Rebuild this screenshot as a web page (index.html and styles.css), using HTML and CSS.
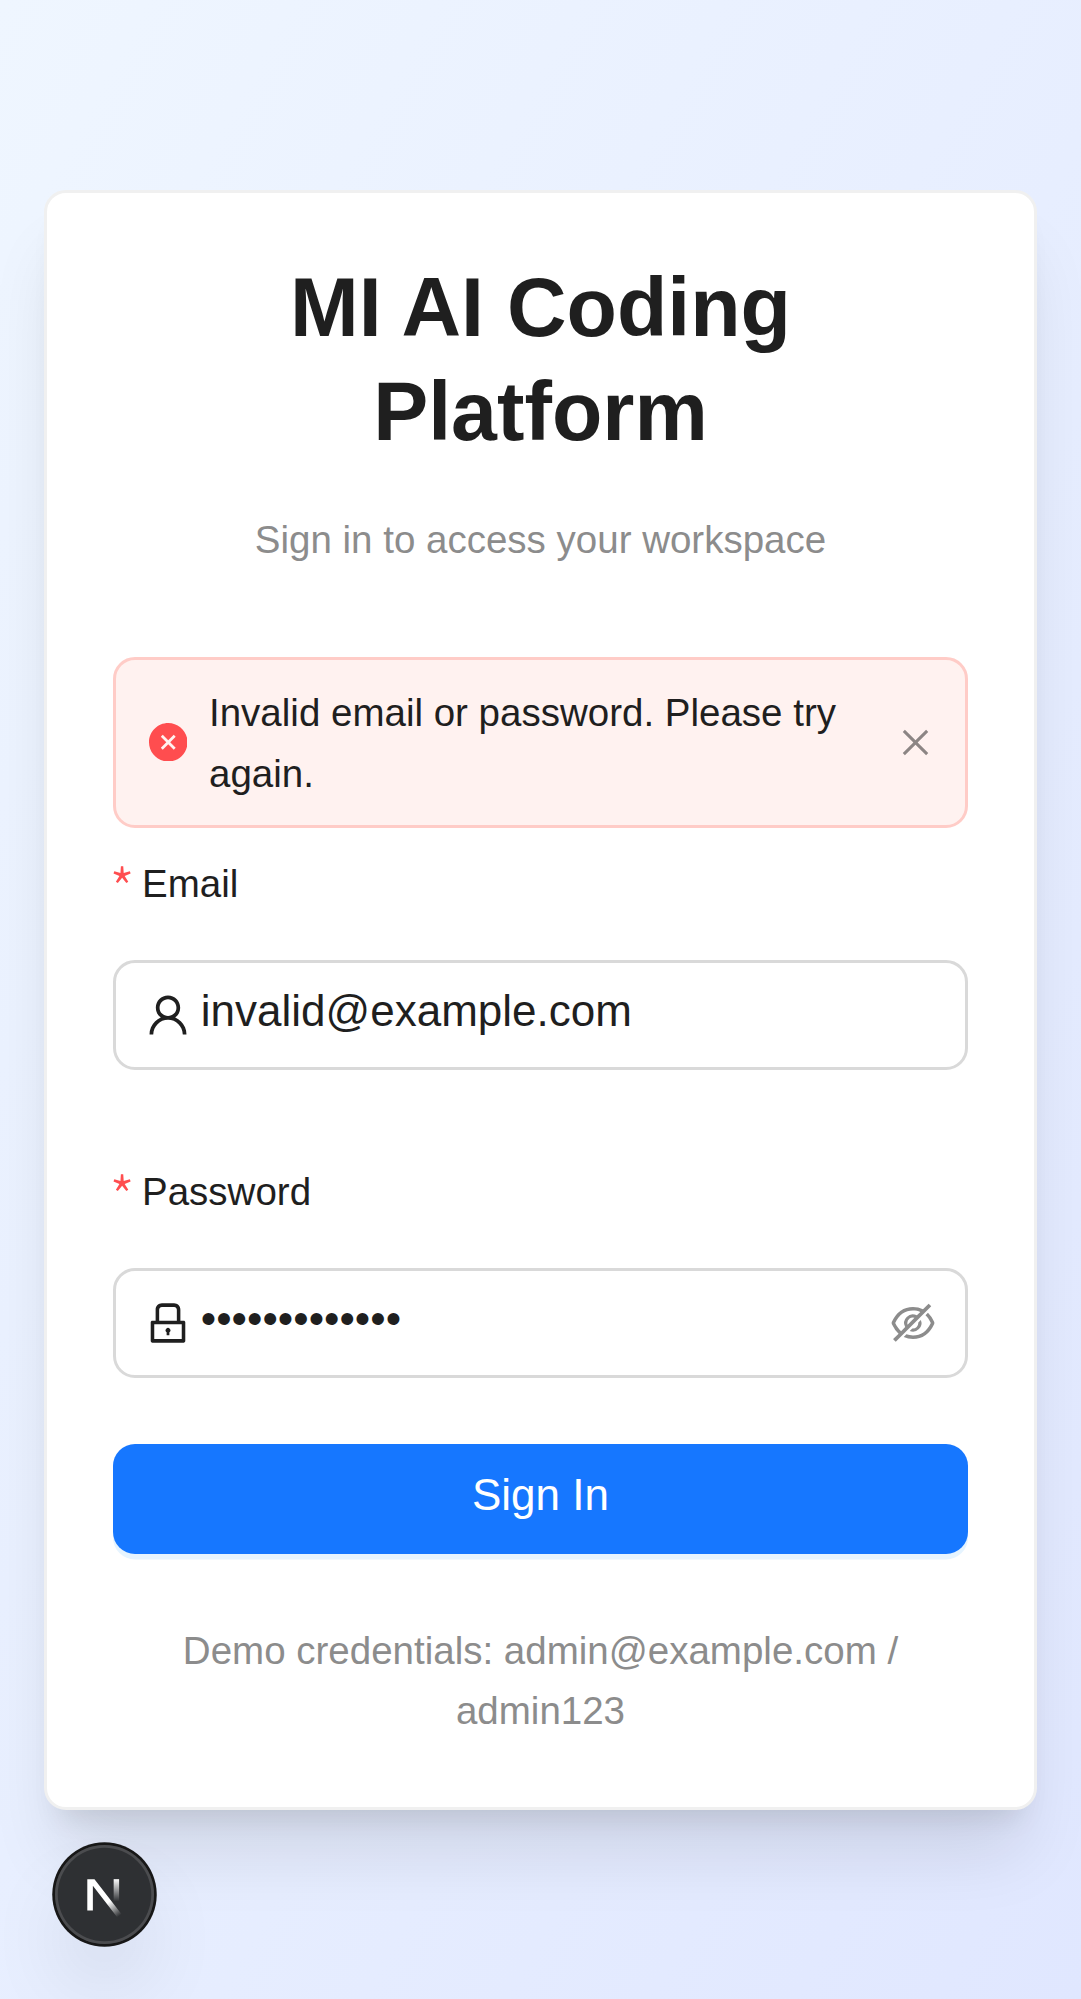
FILE: index.html
```html
<!DOCTYPE html>
<html lang="en">
<head>
<meta charset="utf-8">
<meta name="viewport" content="width=device-width, initial-scale=1">
<title>MI AI Coding Platform</title>
<link rel="stylesheet" href="styles.css">
</head>
<body>
<main class="page">
  <section class="card">
    <header class="intro">
      <h2 class="title">MI AI Coding Platform</h2>
      <p class="subtitle">Sign in to access your workspace</p>
    </header>

    <div class="alert" role="alert">
      <svg class="alert-icon" viewBox="64 64 896 896" aria-hidden="true"><path fill-rule="evenodd" d="M512 64c247.4 0 448 200.6 448 448S759.4 960 512 960 64 759.4 64 512 264.6 64 512 64zm127.98 274.82h-.04l-.08.06L512 466.75 384.14 338.88c-.04-.05-.06-.06-.08-.06a.12.12 0 00-.07 0c-.03 0-.05.01-.09.05l-45.02 45.02a.2.2 0 00-.05.09.12.12 0 000 .07v.02a.27.27 0 00.06.06L466.75 512 338.88 639.86c-.05.04-.06.06-.06.08a.12.12 0 000 .07c0 .03.01.05.05.09l45.02 45.02a.2.2 0 00.09.05.12.12 0 00.07 0c.02 0 .04-.01.08-.05L512 557.25l127.86 127.87c.04.04.06.05.08.05a.12.12 0 00.07 0c.03 0 .05-.01.09-.05l45.02-45.02a.2.2 0 00.05-.09.12.12 0 000-.07v-.02a.27.27 0 00-.05-.06L557.25 512l127.87-127.86c.04-.04.05-.06.05-.08a.12.12 0 000-.07c0-.03-.01-.05-.05-.09l-45.02-45.02a.2.2 0 00-.09-.05.12.12 0 00-.07 0z"/></svg>
      <p class="alert-message">Invalid email or password. Please try again.</p>
      <button class="alert-close" type="button" aria-label="Close">
        <svg viewBox="64 64 896 896" aria-hidden="true"><path fill-rule="evenodd" d="M799.86 166.31c.02 0 .04.02.08.06l57.69 57.7c.04.03.05.05.06.08a.12.12 0 010 .06c0 .03-.02.05-.06.09L569.93 512l287.7 287.7c.04.04.05.06.06.09a.12.12 0 010 .07c0 .02-.02.04-.06.08l-57.7 57.69c-.03.04-.05.05-.07.06a.12.12 0 01-.07 0c-.03 0-.05-.02-.09-.06L512 569.93l-287.7 287.7c-.04.04-.06.05-.09.06a.12.12 0 01-.07 0c-.02 0-.04-.02-.08-.06l-57.69-57.7c-.04-.03-.05-.05-.06-.07a.12.12 0 010-.07c0-.03.02-.05.06-.09L454.07 512l-287.7-287.7c-.04-.04-.05-.06-.06-.09a.12.12 0 010-.07c0-.02.02-.04.06-.08l57.7-57.69c.03-.04.05-.05.07-.06a.12.12 0 01.07 0c.03 0 .05.02.09.06L512 454.07l287.7-287.7c.04-.04.06-.05.09-.06a.12.12 0 01.07 0z"/></svg>
      </button>
    </div>

    <form class="form">
      <div class="field">
        <label class="label" for="email"><span class="required">*</span>Email</label>
        <div class="control">
          <svg class="prefix" viewBox="64 64 896 896" aria-hidden="true"><path d="M858.5 763.6a374 374 0 00-80.6-119.5 375.63 375.63 0 00-119.5-80.6c-.4-.2-.8-.3-1.2-.5C719.5 518 760 444.7 760 362c0-137-111-248-248-248S264 225 264 362c0 82.7 40.5 156 102.8 201.1-.4.2-.8.3-1.2.5-44.8 18.9-85 46-119.5 80.6a375.63 375.63 0 00-80.6 119.5A371.7 371.7 0 00136 901.8a8 8 0 008 8.2h60c4.400 0 7.900-3.500 8-7.800 2-77.200 33-149.500 87.800-204.300 56.700-56.700 132-87.900 212.200-87.900s155.500 31.200 212.200 87.900C779 752.700 810 825 812 902.200c.1 4.400 3.600 7.800 8 7.800h60a8 8 0 008-8.200c-1-47.800-10.900-94.300-29.500-138.200zM512 534c-45.900 0-89.100-17.900-121.600-50.400S340 407.900 340 362c0-45.900 17.900-89.100 50.400-121.600S466.100 190 512 190s89.100 17.900 121.600 50.400S684 316.100 684 362c0 45.900-17.900 89.100-50.400 121.600S557.900 534 512 534z"/></svg>
          <input class="input" id="email" type="text" value="invalid@example.com">
        </div>
      </div>

      <div class="field">
        <label class="label" for="password"><span class="required">*</span>Password</label>
        <div class="control">
          <svg class="prefix" viewBox="64 64 896 896" aria-hidden="true"><path d="M832 464h-68V240c0-70.700-57.300-128-128-128H388c-70.700 0-128 57.300-128 128v224h-68c-17.700 0-32 14.300-32 32v384c0 17.700 14.300 32 32 32h640c17.700 0 32-14.300 32-32V496c0-17.700-14.300-32-32-32zM332 240c0-30.900 25.100-56 56-56h248c30.900 0 56 25.100 56 56v224H332V240zm460 600H232V536h560v304zM484 701v53c0 4.400 3.600 8 8 8h40c4.400 0 8-3.600 8-8v-53a48.010 48.010 0 10-56 0z"/></svg>
          <input class="input" id="password" type="password" value="wrongpassword">
          <svg class="suffix" viewBox="64 64 896 896" aria-hidden="true"><path d="M942.2 486.2Q889.47 375.11 816.7 305l-50.88 50.88C807.31 395.53 843.45 447.4 874.7 512 791.5 684.2 673.4 766 512 766q-72.67 0-133.87-22.38L323 798.75Q408 838 512 838q288.3 0 430.2-300.300a60.290 60.290 0 000-51.500zm-63.570-320.640L836 122.880a8 8 0 00-11.320 0L715.310 232.200Q624.860 186 512 186q-288.300 0-430.200 300.300a60.300 60.300 0 000 51.500q56.690 119.400 136.500 191.410L112.480 835a8 8 0 000 11.310L155.170 889a8 8 0 0011.310 0l712.150-712.120a8 8 0 000-11.320zM149.300 512C232.600 339.800 350.700 258 512 258c54.540 0 104.130 9.360 149.120 28.390l-70.300 70.300a176 176 0 00-238.130 238.130l-83.420 83.420C223.100 637.490 183.300 582.280 149.300 512zm246.700 0a112.110 112.110 0 01146.200-106.690L401.310 546.200A112 112 0 01396 512z"/><path d="M508 624c-3.460 0-6.870-.16-10.250-.47l-52.820 52.820a176.090 176.090 0 00227.420-227.420l-52.820 52.820c.31 3.380.47 6.790.47 10.250a111.940 111.940 0 01-112 112z"/></svg>
        </div>
      </div>

      <button class="submit" type="button">Sign In</button>
    </form>

    <p class="demo">Demo credentials: admin@example.com / admin123</p>
  </section>
</main>

<div class="devtools">
  <svg viewBox="0 0 40 40" aria-hidden="true">
    <defs>
      <linearGradient id="stem" gradientUnits="userSpaceOnUse" x1="24.800" y1="13.700" x2="24.800" y2="22.800">
        <stop offset="0" stop-color="#fff"/><stop offset="1" stop-color="#fff" stop-opacity="0"/>
      </linearGradient>
      <linearGradient id="slash" gradientUnits="userSpaceOnUse" x1="22" y1="22.800" x2="26.300" y2="28.400">
        <stop offset="0" stop-color="#fff"/><stop offset="1" stop-color="#fff" stop-opacity="0"/>
      </linearGradient>
    </defs>
    <path fill="url(#stem)" d="M23.700 13.800h2.200v9.100h-2.200z"/>
    <path fill="url(#slash)" d="M13.050 13.800h2.900L27.300 28.500l-1.700 1.300L15.300 16.500v10h-2.250z"/>
  </svg>
</div>
</body>
</html>
```
FILE: styles.css
```css
* {
  box-sizing: border-box;
}

body {
  margin: 0;
  font-family: "Liberation Sans", Arial, sans-serif;
  font-size: 38.5px;
  line-height: 60.5px;
  color: #1f1f1f;
}

h2,
p {
  margin: 0;
}

.page {
  display: flex;
  align-items: center;
  justify-content: center;
  height: 1999px;
  padding: 0 44px;
  background: linear-gradient(to bottom right, #eff6ff, #e0e7ff);
}

.card {
  width: 100%;
  height: 1620px;
  padding: 62px 66px 0;
  border: 3px solid #f0f0f0;
  border-radius: 22px;
  background: #fff;
  box-shadow: 0 55px 68.75px -13.75px rgba(0, 0, 0, 0.1), 0 22px 27.5px -16.5px rgba(0, 0, 0, 0.1);
}

.intro {
  height: 402px;
  text-align: center;
}

.title {
  font-size: 82.5px;
  line-height: 104.5px;
  font-weight: 700;
}

.subtitle {
  margin-top: 46px;
  color: #8c8c8c;
}

.alert {
  display: flex;
  align-items: center;
  height: 171px;
  padding: 0 33px 0 32.5px;
  border: 3px solid #ffccc7;
  border-radius: 22px;
  background: #fff2f0;
}

.alert-icon {
  flex: none;
  width: 38.5px;
  height: 38.5px;
  margin-right: 22px;
  fill: #ff4d4f;
}

.alert-message {
  flex: 1;
  padding-top: 1px;
  line-height: 61px;
}

.alert-close {
  display: flex;
  flex: none;
  margin-left: 22px;
  padding: 0;
  border: 0;
  background: none;
}

.alert-close svg {
  width: 33px;
  height: 33px;
  fill: rgba(0, 0, 0, 0.45);
}

.field {
  height: 308px;
}

.label {
  display: flex;
  height: 132px;
  padding-top: 26px;
}

.required {
  display: flex;
  justify-content: center;
  width: 18px;
  margin: 3px 11px 0 0;
  font-family: "Noto Sans CJK SC", sans-serif;
  font-size: 58px;
  font-weight: 300;
  color: #ff4d4f;
}

.control {
  display: flex;
  align-items: center;
  height: 110px;
  padding: 0 30px 0 29.5px;
  border: 3px solid #d9d9d9;
  border-radius: 22px;
}

.prefix {
  flex: none;
  width: 44px;
  height: 44px;
  margin-right: 11.3px;
  fill: #1f1f1f;
}

.input {
  flex: 1;
  min-width: 0;
  height: 66px;
  margin: 0 0 8px;
  padding: 0;
  border: 0;
  outline: 0;
  background: none;
  font: 44px/66px "Liberation Sans", Arial, sans-serif;
  color: #1f1f1f;
}

.suffix {
  flex: none;
  width: 44px;
  height: 44px;
  fill: #8c8c8c;
}

.submit {
  display: block;
  width: 100%;
  height: 110px;
  padding: 0 0 7px;
  border: 0;
  border-radius: 22px;
  background: #1677ff;
  box-shadow: 0 5.5px 0 rgba(5, 145, 255, 0.1);
  font: 44px/66px "Liberation Sans", Arial, sans-serif;
  color: #fff;
}

.demo {
  margin-top: 67px;
  text-align: center;
  color: #8c8c8c;
}

.devtools {
  position: fixed;
  left: 55px;
  bottom: 55px;
  width: 99px;
  height: 99px;
  border-radius: 50%;
  background: #2e3033;
  box-shadow: 0 0 0 2.75px #171717, inset 0 0 0 2.75px #4b4c4f, 0 44px 88px -22px rgba(0, 0, 0, 0.24);
}

.devtools svg {
  display: block;
  width: 100%;
  height: 100%;
}
```
